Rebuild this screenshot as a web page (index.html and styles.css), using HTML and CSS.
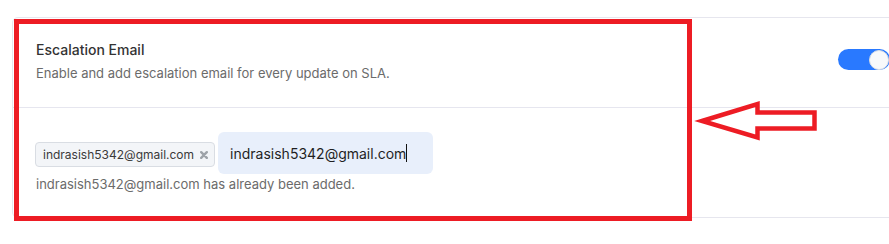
FILE: index.html
```html
<!DOCTYPE html>
<html>
<head>
<meta charset="utf-8">
<link rel="stylesheet" href="styles.css">
</head>
<body>
<div class="page">
  <div class="card">
    <div class="setting">
      <div class="setting-text">
        <div class="setting-title">Escalation Email</div>
        <div class="setting-desc">Enable and add escalation email for every update on SLA.</div>
      </div>
      <div class="toggle"><span class="knob"></span></div>
    </div>
    <div class="emails">
      <div class="email-row">
        <span class="chip">indrasish5342@gmail.com
          <svg class="chip-x" width="8" height="8" viewBox="0 0 8 8"><path d="M1.2 1.2L6.8 6.8M6.8 1.2L1.2 6.8" stroke="#9ea3a9" stroke-width="2.4" stroke-linecap="round"/></svg>
        </span>
        <div class="email-input">indrasish5342@gmail.com<span class="caret"></span></div>
      </div>
      <div class="email-error">indrasish5342@gmail.com has already been added.</div>
    </div>
  </div>
  <svg class="annotation" width="889" height="244" viewBox="0 0 889 244">
    <rect x="16.5" y="21.5" width="673" height="197" fill="none" stroke="#ed1c24" stroke-width="5"/>
    <polygon points="702,121 757.5,104 757.5,112.5 814.5,112.5 814.5,128.5 757.5,128.5 757.5,137.5" fill="none" stroke="#ed1c24" stroke-width="4.5" stroke-linejoin="miter"/>
  </svg>
</div>
</body>
</html>
```

FILE: styles.css
```css
html, body {
  margin: 0;
  padding: 0;
  background: #ffffff;
}
body {
  font-family: Inter, "Noto Sans", "Liberation Sans", sans-serif;
  width: 889px;
  height: 244px;
  overflow: hidden;
}
.page {
  position: relative;
  width: 889px;
  height: 244px;
  padding-top: 17px;
  box-sizing: border-box;
}
.card {
  margin-left: 12px;
  width: 900px;
  box-sizing: border-box;
  border: 1px solid #e6e6ee;
  border-radius: 6px;
}
.setting {
  display: flex;
  align-items: center;
  padding: 22px 21px 24px 23px;
  border-bottom: 1px solid #e6e6ef;
}
.setting-text {
  flex: 1;
}
.setting-title {
  font-size: 14px;
  line-height: 20px;
  font-weight: 500;
  color: #333333;
}
.setting-desc {
  margin-top: 3px;
  font-size: 13px;
  line-height: 20px;
  color: #6b6b6b;
}
.toggle {
  width: 52px;
  height: 21px;
  border-radius: 11px;
  background: #2979ff;
  display: flex;
  align-items: center;
  justify-content: flex-end;
  margin-top: -4px;
}
.knob {
  width: 20px;
  height: 20px;
  border-radius: 50%;
  background: #f8f9fb;
  border: 1px solid #d9dde3;
  box-sizing: border-box;
  margin-right: 1px;
}
.emails {
  padding: 24px 23px 24px 22px;
}
.email-row {
  display: flex;
  align-items: flex-start;
  gap: 3px;
}
.chip {
  margin-top: 10px;
  height: 25px;
  box-sizing: border-box;
  display: inline-flex;
  align-items: center;
  gap: 6px;
  padding: 0 6px 0 7px;
  background: #f3f5f8;
  border: 1px solid #d9dde3;
  border-radius: 4px;
  font-size: 12px;
  color: #3a3a3a;
}
.chip-x {
  display: block;
}
.email-input {
  width: 215px;
  height: 42px;
  box-sizing: border-box;
  display: flex;
  align-items: center;
  padding-left: 12px;
  background: #e8effb;
  border-radius: 6px;
  font-size: 14px;
  color: #1f1f1f;
}
.caret {
  display: inline-block;
  width: 1px;
  height: 18px;
  background: #111111;
}
.email-error {
  margin-top: 1px;
  padding-left: 1px;
  font-size: 13px;
  line-height: 18px;
  color: #6b6b6b;
}
.annotation {
  position: absolute;
  left: 0;
  top: 0;
  pointer-events: none;
}
```
